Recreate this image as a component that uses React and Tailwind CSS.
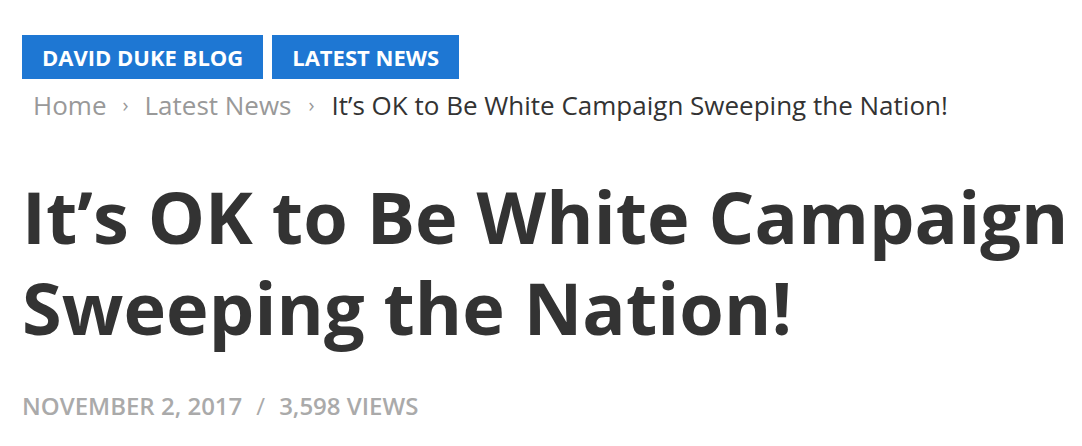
import React from 'react'

function Tag({ children }) {
  return (
    <a href="#" className="flex h-[44px] items-center bg-[#1e77d3] px-[20px] text-[22px] font-bold uppercase text-white">
      {children}
    </a>
  )
}

export default function App() {
  return (
    <div className="min-h-[446px] bg-white pl-[22px] pt-[35px] font-['Open_Sans',sans-serif]">
      <div className="flex gap-[9px]">
        <Tag>David Duke Blog</Tag>
        <Tag>Latest News</Tag>
      </div>
      <div className="mt-[6px] flex items-center pl-[11px] text-[26px] leading-[40px] text-[#999]">
        <a href="#">Home</a>
        <span className="mx-[16px] text-[20px]">›</span>
        <a href="#">Latest News</a>
        <span className="mx-[17px] text-[20px]">›</span>
        <span className="text-[#333]">It’s OK to Be White Campaign Sweeping the Nation!</span>
      </div>
      <h1 className="mt-[46px] text-[72px] font-bold leading-[91px] tracking-[0.1px] text-[#333] whitespace-nowrap">
        It’s OK to Be White Campaign<br />Sweeping the Nation!
      </h1>
      <div className="mt-[35px] flex items-center text-[24px] font-semibold uppercase text-[#aaa]">
        <span>November 2, 2017</span>
        <span className="mx-[14px] font-normal">/</span>
        <span>3,598 Views</span>
      </div>
    </div>
  )
}
